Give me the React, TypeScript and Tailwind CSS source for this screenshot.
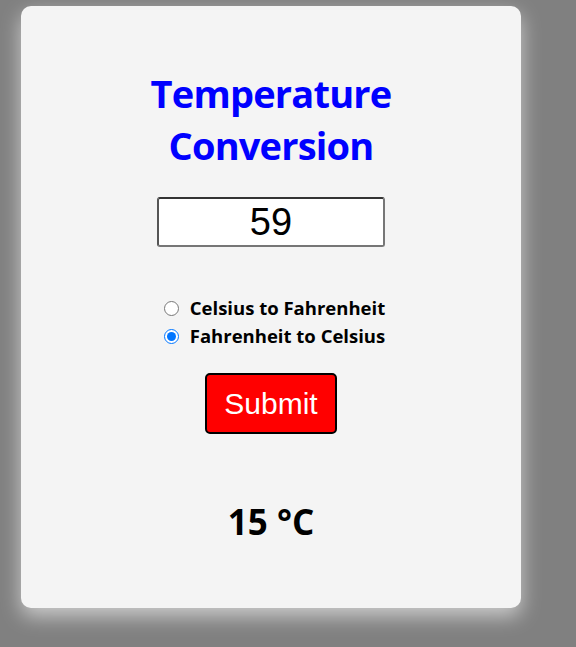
import { useState } from "react"

export default function App() {
  const [value, setValue] = useState("59")
  const [mode, setMode] = useState("f2c")

  return (
    <div className="min-h-screen bg-[#808080] pt-[6px] pl-[21px]" style={{ fontFamily: '"Open Sans", sans-serif' }}>
      {/* Card */}
      <div className="w-[500px] h-[602px] bg-[#f4f4f4] rounded-[10px] shadow-[0_8px_20px_rgba(255,255,255,0.6)] flex flex-col items-center pt-[61px]">
        <h1 className="text-[38px] leading-[52px] font-bold text-[#0000ff] text-center w-[300px] tracking-[-0.8px]">
          Temperature Conversion
        </h1>

        <input
          type="text"
          value={value}
          onChange={(e) => setValue(e.target.value)}
          className="mt-[26px] w-[228px] h-[50px] border-2 border-[#767676] border-t-[#333] border-l-[#555] rounded-[3px] bg-white text-center text-[38px] text-black outline-none"
          style={{ fontFamily: '"Liberation Sans", Arial, sans-serif' }}
        />

        <div className="mt-[47px] pl-[7px] flex flex-col text-[18.5px] font-bold text-black leading-[28px]">
          <label className="flex items-center gap-[11px]">
            <input
              type="radio"
              name="mode"
              checked={mode === "c2f"}
              onChange={() => setMode("c2f")}
              className="w-[15px] h-[15px] m-0"
            />
            Celsius to Fahrenheit
          </label>
          <label className="flex items-center gap-[11px]">
            <input
              type="radio"
              name="mode"
              checked={mode === "f2c"}
              onChange={() => setMode("f2c")}
              className="w-[15px] h-[15px] m-0 accent-[#0075ff]"
            />
            Fahrenheit to Celsius
          </label>
        </div>

        <button
          className="mt-[23px] w-[132px] h-[61px] bg-[#ff0000] border-2 border-black rounded-[5px] text-white text-[30px]"
          style={{ fontFamily: '"Liberation Sans", Arial, sans-serif' }}
        >
          Submit
        </button>

        <div className="mt-[62px] text-[35px] font-bold text-black">15 °C</div>
      </div>
    </div>
  )
}
